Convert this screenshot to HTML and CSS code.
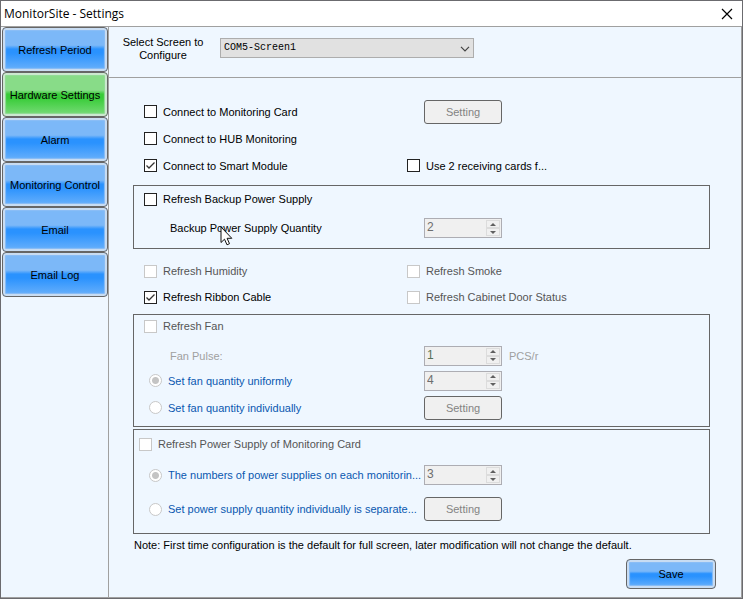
FILE: index.html
```html
<!DOCTYPE html>
<html lang="en">
<head>
<meta charset="utf-8">
<title>MonitorSite - Settings</title>
<link rel="stylesheet" href="styles.css">
</head>
<body>
<div class="window">
  <header class="titlebar">
    <h1 class="title">MonitorSite - Settings</h1>
    <button class="close" type="button" aria-label="Close">
      <svg width="12" height="12" viewBox="0 0 12 12" aria-hidden="true"><path d="M1 1 11 11M11 1 1 11" stroke="#000" stroke-width="1.2" fill="none"/></svg>
    </button>
  </header>
  <div class="body">
    <nav class="sidebar">
      <button class="glossy" type="button">Refresh Period</button>
      <button class="glossy active" type="button">Hardware Settings</button>
      <button class="glossy" type="button">Alarm</button>
      <button class="glossy" type="button">Monitoring Control</button>
      <button class="glossy" type="button">Email</button>
      <button class="glossy" type="button">Email Log</button>
    </nav>
    <main class="content">
      <div class="screen-bar">
        <label class="screen-label" for="screen">Select Screen to Configure</label>
        <div class="select-box">
          <select id="screen"><option>COM5-Screen1</option></select>
          <svg class="chevron" width="10" height="6" viewBox="0 0 10 6" aria-hidden="true"><path d="M1 .8 5 4.8 9 .8" stroke="#444" stroke-width="1.2" fill="none"/></svg>
        </div>
      </div>
      <form class="settings">
        <section class="plain connect">
          <div class="row">
            <label class="check"><input type="checkbox">Connect to Monitoring Card</label>
            <div class="control"><button class="setting" type="button" disabled>Setting</button></div>
          </div>
          <div class="row">
            <label class="check"><input type="checkbox">Connect to HUB Monitoring</label>
          </div>
          <div class="row">
            <label class="check"><input type="checkbox" checked>Connect to Smart Module</label>
            <label class="check second"><input type="checkbox">Use 2 receiving cards f...</label>
          </div>
        </section>

        <section class="group backup">
          <div class="row first">
            <label class="check"><input type="checkbox">Refresh Backup Power Supply</label>
          </div>
          <div class="row">
            <label class="caption" for="backup-qty">Backup Power Supply Quantity</label>
            <div class="control">
              <div class="spinner">
                <input id="backup-qty" type="number" value="2" disabled>
                <div class="steps"><button type="button" aria-label="Increase" disabled></button><button type="button" aria-label="Decrease" disabled></button></div>
              </div>
            </div>
            <svg class="cursor" width="13" height="20" viewBox="0 0 13 20" aria-hidden="true"><path d="M1 1V16.500L4.500 13.200 7 18.800 9.500 17.700 7.100 12.300H11.800Z" fill="#fff" stroke="#111" stroke-width="1"/></svg>
          </div>
        </section>

        <section class="plain sensors">
          <div class="row">
            <label class="check"><input type="checkbox" disabled>Refresh Humidity</label>
            <label class="check second"><input type="checkbox" disabled>Refresh Smoke</label>
          </div>
          <div class="row">
            <label class="check"><input type="checkbox" checked>Refresh Ribbon Cable</label>
            <label class="check second"><input type="checkbox" disabled>Refresh Cabinet Door Status</label>
          </div>
        </section>

        <section class="group fan">
          <div class="row first">
            <label class="check"><input type="checkbox" disabled>Refresh Fan</label>
          </div>
          <div class="row">
            <label class="caption muted" for="fan-pulse">Fan Pulse:</label>
            <div class="control">
              <div class="spinner">
                <input id="fan-pulse" class="green" type="number" value="1" disabled>
                <div class="steps"><button type="button" aria-label="Increase" disabled></button><button type="button" aria-label="Decrease" disabled></button></div>
              </div>
              <span class="unit">PCS/r</span>
            </div>
          </div>
          <div class="row">
            <label class="radio"><input type="radio" name="fan" checked disabled>Set fan quantity uniformly</label>
            <div class="control">
              <div class="spinner">
                <input type="number" value="4" aria-label="Fan quantity" disabled>
                <div class="steps"><button type="button" aria-label="Increase" disabled></button><button type="button" aria-label="Decrease" disabled></button></div>
              </div>
            </div>
          </div>
          <div class="row last">
            <label class="radio"><input type="radio" name="fan" disabled>Set fan quantity individually</label>
            <div class="control"><button class="setting" type="button" disabled>Setting</button></div>
          </div>
        </section>

        <section class="group power">
          <div class="row first">
            <label class="check outdent"><input type="checkbox" disabled>Refresh Power Supply of Monitoring Card</label>
          </div>
          <div class="row">
            <label class="radio"><input type="radio" name="power" checked disabled>The numbers of power supplies on each monitorin...</label>
            <div class="control">
              <div class="spinner">
                <input type="number" value="3" aria-label="Power supply quantity" disabled>
                <div class="steps"><button type="button" aria-label="Increase" disabled></button><button type="button" aria-label="Decrease" disabled></button></div>
              </div>
            </div>
          </div>
          <div class="row">
            <label class="radio"><input type="radio" name="power" disabled>Set power supply quantity individually is separate...</label>
            <div class="control"><button class="setting" type="button" disabled>Setting</button></div>
          </div>
        </section>

        <p class="note">Note: First time configuration is the default for full screen, later modification will not change the default.</p>
        <div class="actions"><button class="glossy save" type="button">Save</button></div>
      </form>
    </main>
  </div>
</div>
</body>
</html>
```
FILE: styles.css
```css
* { box-sizing: border-box; }
body {
  margin: 0;
  background: #6b6869;
  color: #000;
  font: 11px/14px "Liberation Sans", Arial, sans-serif;
}
button, input, select { margin: 0; font: inherit; color: inherit; }
.window {
  display: flex;
  flex-direction: column;
  min-height: 100vh;
  border: 1px solid #6b6b6f;
  background: #eff7ff;
}
.titlebar {
  display: flex;
  align-items: center;
  justify-content: space-between;
  height: 26px;
  padding: 0 9px 0 3px;
  background: #fff;
  border-bottom: 1px solid #a0a0a0;
}
.title { margin: 0; font: 12px/16px "Open Sans", "Segoe UI", sans-serif; }
.close { display: flex; padding: 0; border: 0; background: none; }
.body { display: flex; flex: 1; border-right: 1px solid #a0a0a0; border-bottom: 1px solid #a0a0a0; }

.sidebar {
  display: flex;
  flex-direction: column;
  flex: none;
  width: 108px;
  padding-left: 1px;
  border-right: 1px solid #a0a0a0;
}
.glossy {
  height: 45px;
  padding: 0;
  border: 1px solid #666;
  border-radius: 4px;
  background: linear-gradient(#7cb8f8 0, #7cb8f8 40%, #2a92fe 49%, #2a92fe 58%, #6cb2fb 100%);
  box-shadow: inset 0 0 0 2px #c8dcf2, inset 0 0 1px 3px #8cbef6;
}
.glossy.active {
  background: linear-gradient(#88dc88 0, #88dc88 40%, #38cc38 49%, #38cc38 58%, #7cdc7c 100%);
  box-shadow: inset 0 0 0 2px #cce8d0, inset 0 0 1px 3px #94dc98;
}

.content { display: flex; flex-direction: column; flex: 1; min-width: 0; }
.screen-bar {
  display: flex;
  align-items: flex-start;
  height: 51px;
  padding: 9px 0 0 10px;
  border-bottom: 1px solid #a0a0a0;
}
.screen-label { width: 88px; margin-right: 13px; line-height: 13px; text-align: center; }
.select-box { position: relative; width: 254px; margin-top: 2px; }
.select-box select {
  display: block;
  width: 100%;
  height: 20px;
  padding: 0 3px;
  border: 1px solid #adadad;
  border-radius: 0;
  background: #e1e1e1;
  appearance: none;
  font: 10px/18px "Liberation Mono", monospace;
}
.chevron { position: absolute; right: 4px; top: 8px; }

.settings { display: flex; flex-direction: column; padding: 20px 31px 8px 24px; }
.row {
  position: relative;
  display: grid;
  grid-template-columns: 273px 1fr;
  align-items: center;
  height: 26px;
  white-space: nowrap;
}
.plain { padding: 0 1px; }
.group { border: 1px solid #666; }
.connect .row { height: 27px; }
.backup { margin-top: 6px; padding-bottom: 4px; }
.backup .row { height: 32px; }
.backup .row.first { height: 26px; }
.sensors { margin: 9px 0 4px; }
.fan { padding-bottom: 4px; }
.fan .row { height: 25px; }
.fan .row.first { height: 22px; margin-bottom: 6px; }
.fan .row.last { height: 29px; }
.power { margin-top: 2px; padding-bottom: 7px; }
.power .row { height: 34px; }
.power .row.first { height: 28px; }

.check, .radio { display: flex; align-items: center; gap: 6px; padding-left: 10px; }
.radio { padding-left: 15px; color: #0a57b0; }
.check.second { padding-left: 0; }
.check.outdent { padding-left: 5px; }
.check:has(:disabled) { color: #555; }
.check input, .radio input {
  flex: none;
  width: 13px;
  height: 13px;
  appearance: none;
  background: #fff center / 11px 11px no-repeat;
  border: 1px solid #222;
}
.check input:disabled, .radio input:disabled { border-color: #c8c8c8; }
.check input:checked {
  background-image: url("data:image/svg+xml,%3Csvg xmlns='http://www.w3.org/2000/svg' viewBox='0 0 11 11'%3E%3Cpath d='M1.500 5.500 4 8 9.500 2.500' fill='none' stroke='%23333' stroke-width='1.300'/%3E%3C/svg%3E");
}
.radio input { border-radius: 50%; }
.radio input:checked { background: radial-gradient(circle, #c4c4c4 0 3px, #fff 4px); }
.caption { padding-left: 36px; }
.muted, .unit { color: #a0a0a0; }
.control { display: flex; align-items: center; gap: 7px; padding-left: 17px; }
.setting {
  width: 78px;
  height: 24px;
  padding: 0;
  border: 1px solid #666;
  border-radius: 3px;
  background: #f0f0f0;
  color: #838383;
}
.spinner { display: flex; width: 78px; height: 20px; padding: 1px; border: 1px solid #adadb3; background: #f0f0f0; }
.spinner input {
  flex: 1;
  min-width: 0;
  padding: 0 0 2px 1px;
  border: 0;
  background: none;
  color: #6d6d6d;
  font-size: 12px;
  appearance: textfield;
}
.spinner input.green { color: #557055; }
.spinner input::-webkit-inner-spin-button { appearance: none; }
.steps { display: flex; flex-direction: column; width: 14px; }
.steps button {
  display: flex;
  flex: 1;
  align-items: center;
  justify-content: center;
  min-height: 0;
  padding: 0;
  border: 1px solid #dcdcdc;
  background: #f0f0f0;
}
.steps button::before {
  content: "";
  border: 3px solid transparent;
  border-top: 0;
  border-bottom-color: #606060;
}
.steps button + button::before { border-top: 3px solid #606060; border-bottom: 0; }
.cursor { position: absolute; left: 86px; top: 14px; }
.note { margin: 4px 0 0; padding-left: 1px; white-space: nowrap; }
.actions { display: flex; justify-content: flex-end; margin: 7px -6px 0 0; }
.save { width: 90px; height: 30px; }
```
